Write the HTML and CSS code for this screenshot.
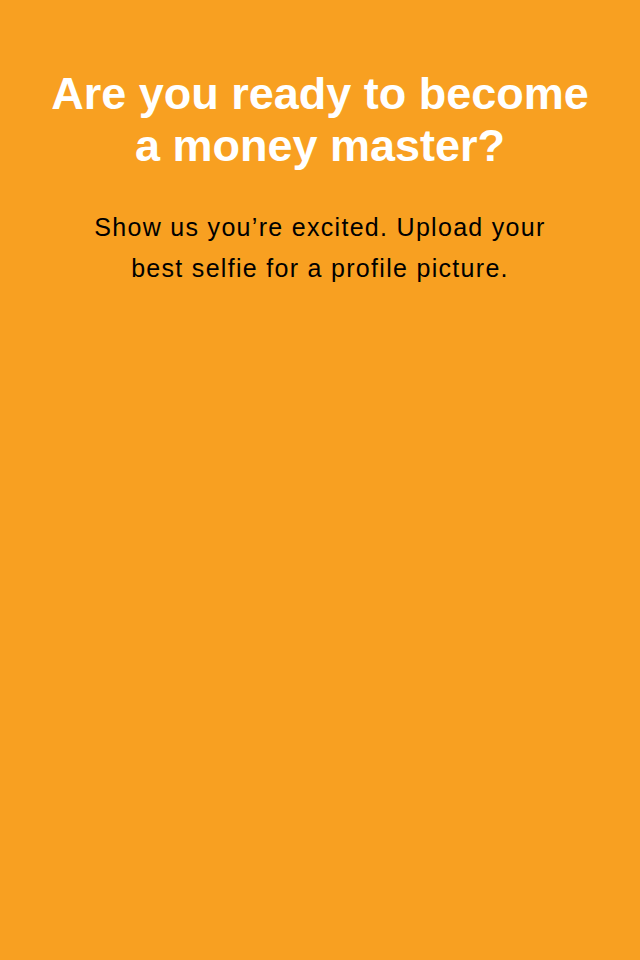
FILE: index.html
```html
<!DOCTYPE html>
<html lang="en">
<head>
<meta charset="utf-8">
<title>Money master</title>
<link rel="stylesheet" href="styles.css">
</head>
<body>
<main class="screen">
  <h1 class="title">Are you ready to become<br>a money master?</h1>
  <p class="subtitle">Show us you’re excited. Upload your<br>best selfie for a profile picture.</p>
</main>
</body>
</html>
```
FILE: styles.css
```css
html, body {
  margin: 0;
  padding: 0;
  height: 100%;
  background: #f8a021;
}
.screen {
  min-height: 960px;
  display: flex;
  flex-direction: column;
  align-items: center;
  padding-top: 68px;
  box-sizing: border-box;
  font-family: "Liberation Sans", Arial, sans-serif;
  text-align: center;
}
.title {
  margin: 0;
  color: #ffffff;
  font-weight: 700;
  font-size: 45px;
  line-height: 52px;
}
.subtitle {
  margin: 35px 0 0;
  color: #000000;
  font-size: 25px;
  line-height: 41px;
  letter-spacing: 1.3px;
}
```
